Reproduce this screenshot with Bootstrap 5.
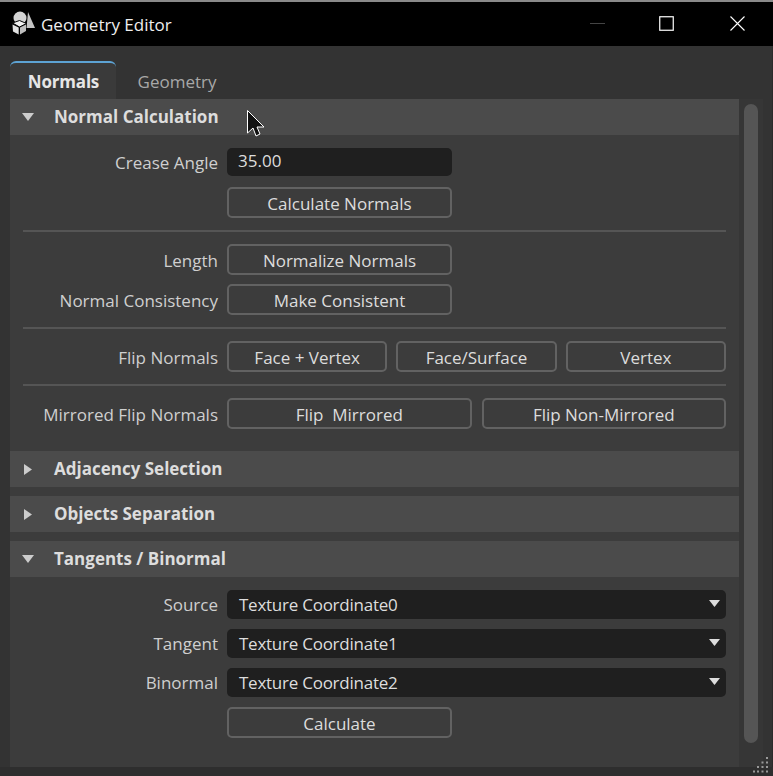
<!DOCTYPE html>
<html lang="en">
<head>
<meta charset="utf-8">
<title>Geometry Editor</title>
<link href="https://cdn.jsdelivr.net/npm/bootstrap@5.3.0/dist/css/bootstrap.min.css" rel="stylesheet">
<style>
html,body{height:776px;overflow:hidden;background:#333;}
body{font-family:"Open Sans","Noto Sans",sans-serif;font-size:17px;color:#ddd;position:relative;}
.win{width:773px;height:776px;background:#333;border-top:2px solid #8a8a8a;display:flex;flex-direction:column;box-shadow:inset -1px 0 #2b2b2b;}
.titlebar{height:44px;background:#000;color:#eee;flex:none;padding-left:12px;}
.titlebar .logo{margin-bottom:4px;flex:none;}
.titlebar .ttl{font-size:17px;margin-left:5px;padding-top:1px;}
.winbtn{width:71px;height:44px;display:flex;align-items:center;justify-content:center;padding-bottom:1px;}
.winbtn.narrow{width:67px;}
.tabstrip{height:53px;flex:none;padding:15px 0 0 10px;}
.tabx{height:38px;width:106px;display:flex;align-items:center;justify-content:center;font-size:17px;color:#a8a8a8;}
.tabx.on{background:#3a3a3a;color:#e6e6e6;font-weight:700;letter-spacing:-.2px;border-top:2px solid #5da3d4;border-radius:6px 6px 0 0;padding-top:1px;padding-left:1px;}
.tabx.off{width:122px;padding-top:3px;}
.bodyarea{height:668px;flex:none;background:#3c3c3c;margin-left:10px;margin-right:10px;display:flex;}
.scrolltrack{width:24px;flex:none;background:#363636;margin-left:-1px;}
.thumb{width:14px;height:639px;background:#555;border-radius:7px;margin:5px 0 0 5px;}
.panes{width:730px;flex:none;background:#3c3c3c;}
.sechead{height:36px;background:#4b4b4b;display:flex;align-items:center;font-weight:700;font-size:17px;color:#ddd;padding-left:12px;}
.sechead svg{margin-right:20px;flex:none;}
.secgap{height:9px;}
.rowx{display:flex;align-items:center;gap:9px;padding-right:14px;}
.lab{width:208px;text-align:right;flex:none;font-size:17px;color:#cfcfcf;white-space:nowrap;padding-top:1px;}
.rowb .lab{padding-top:3px;}
.fieldx{flex:1;display:flex;gap:9px;min-width:0;}
.fieldx.wide{gap:10px;}
.bx{height:31px;border:2px solid #626262;border-radius:5px;background:#3c3c3c;color:#dcdcdc;font-size:17px;padding:2px 0 0;flex:1;line-height:25px;}
.bx.half{flex:none;width:225px;}
.inp{width:225px;height:28px;background:#1f1f1f;border-radius:5px;color:#ddd;padding:0 11px;line-height:26px;font-size:17px;}
.sel{flex:1;height:29px;background:#1f1f1f;border-radius:5px;color:#ddd;padding:0 6px 0 12px;line-height:28px;font-size:17px;letter-spacing:-.25px;display:flex;align-items:center;justify-content:space-between;}
.sel svg{margin-bottom:3px;}
.rulex{height:2px;background:#555;margin-left:13px;margin-right:14px;}
.foot{height:9px;flex:none;background:#2e2e2e;}
.grip{position:absolute;right:4px;bottom:3px;}
.cursorx{position:absolute;left:247px;top:110px;}
.mt13{margin-top:13px;}.mt12{margin-top:12px;}.mt11{margin-top:11px;}.mt10{margin-top:10px;}.mt9{margin-top:9px;}.mt22{margin-top:22px;}
</style>
</head>
<body>
<div class="win">
  <div class="titlebar d-flex align-items-center">
    <svg class="logo" width="24" height="25" viewBox="0 0 24 25"><circle cx="8" cy="8" r="6.500" fill="#d4d4d4"/><path d="M16 2l7 16h-8.500z" fill="#c4c4c4"/><path d="M0.500 13l7-2.500 7 3-7 3.500z" fill="#f0f0f0" stroke="#000" stroke-width="1"/><path d="M.5 14.500l6.200 3v7l-5.700-3z" fill="#e2e2e2"/><path d="M8 17.500l6-3v6.500l-6 3.500z" fill="#bdbdbd"/></svg>
    <span class="ttl">Geometry Editor</span>
    <div class="d-flex ms-auto">
      <div class="winbtn narrow"><svg width="15" height="2"><rect width="15" height="1" fill="#444"/></svg></div>
      <div class="winbtn"><svg width="15" height="15"><rect x=".75" y=".75" width="13.5" height="13.5" fill="none" stroke="#fff" stroke-width="1.2"/></svg></div>
      <div class="winbtn"><svg width="15" height="15"><path d="M.5.5l14 14M14.500.5l-14 14" stroke="#fff" stroke-width="1.1"/></svg></div>
    </div>
  </div>
  <div class="tabstrip d-flex">
    <div class="tabx on">Normals</div>
    <div class="tabx off">Geometry</div>
  </div>
  <div class="bodyarea">
    <div class="panes">
      <div class="sechead"><svg width="12" height="8"><path d="M0 0h12L6 8z" fill="#ccc"/></svg>Normal Calculation</div>
      <div class="rowx mt13"><div class="lab">Crease Angle</div><div class="fieldx"><div class="inp">35.00</div></div></div>
      <div class="rowx rowb mt11"><div class="lab"></div><div class="fieldx"><button class="bx half">Calculate Normals</button></div></div>
      <div class="rulex mt12"></div>
      <div class="rowx rowb mt12"><div class="lab">Length</div><div class="fieldx"><button class="bx half">Normalize Normals</button></div></div>
      <div class="rowx rowb mt9"><div class="lab">Normal Consistency</div><div class="fieldx"><button class="bx half">Make Consistent</button></div></div>
      <div class="rulex mt12"></div>
      <div class="rowx rowb mt12"><div class="lab">Flip Normals</div><div class="fieldx"><button class="bx">Face + Vertex</button><button class="bx">Face/Surface</button><button class="bx">Vertex</button></div></div>
      <div class="rulex mt12"></div>
      <div class="rowx rowb mt12"><div class="lab">Mirrored Flip Normals</div><div class="fieldx wide"><button class="bx">Flip&nbsp; Mirrored</button><button class="bx">Flip Non-Mirrored</button></div></div>
      <div class="sechead mt22"><svg width="12" height="11"><path d="M2 0l8 5.500-8 5.500z" fill="#ccc"/></svg>Adjacency Selection</div>
      <div class="secgap"></div>
      <div class="sechead"><svg width="12" height="11"><path d="M2 0l8 5.500-8 5.500z" fill="#ccc"/></svg>Objects Separation</div>
      <div class="secgap"></div>
      <div class="sechead"><svg width="12" height="8"><path d="M0 0h12L6 8z" fill="#ccc"/></svg>Tangents / Binormal</div>
      <div class="rowx mt13"><div class="lab">Source</div><div class="fieldx"><div class="sel">Texture Coordinate0<svg width="11" height="7"><path d="M0 0h11L5.500 7z" fill="#ddd"/></svg></div></div></div>
      <div class="rowx mt10"><div class="lab">Tangent</div><div class="fieldx"><div class="sel">Texture Coordinate1<svg width="11" height="7"><path d="M0 0h11L5.500 7z" fill="#ddd"/></svg></div></div></div>
      <div class="rowx mt10"><div class="lab">Binormal</div><div class="fieldx"><div class="sel">Texture Coordinate2<svg width="11" height="7"><path d="M0 0h11L5.500 7z" fill="#ddd"/></svg></div></div></div>
      <div class="rowx rowb mt10"><div class="lab"></div><div class="fieldx"><button class="bx half">Calculate</button></div></div>
    </div>
    <div class="scrolltrack"><div class="thumb"></div></div>
  </div>
  <div class="foot"></div>
</div>
<svg class="cursorx" width="18" height="27" viewBox="0 0 18 27"><path d="M.5.5V23L6 18l3 8 4-2-3-7h7z" fill="#111" stroke="#fff" stroke-width="1"/></svg>
<svg class="grip" width="18" height="18"><g fill="#999"><rect x="15" y="2" width="2" height="2"/><rect x="10.500" y="6.500" width="2" height="2"/><rect x="15" y="6.500" width="2" height="2"/><rect x="6" y="11" width="2" height="2"/><rect x="10.500" y="11" width="2" height="2"/><rect x="15" y="11" width="2" height="2"/><rect x="2" y="15.500" width="2" height="2"/><rect x="6" y="15.500" width="2" height="2"/><rect x="10.500" y="15.500" width="2" height="2"/><rect x="15" y="15.500" width="2" height="2"/></g></svg>
</body>
</html>
